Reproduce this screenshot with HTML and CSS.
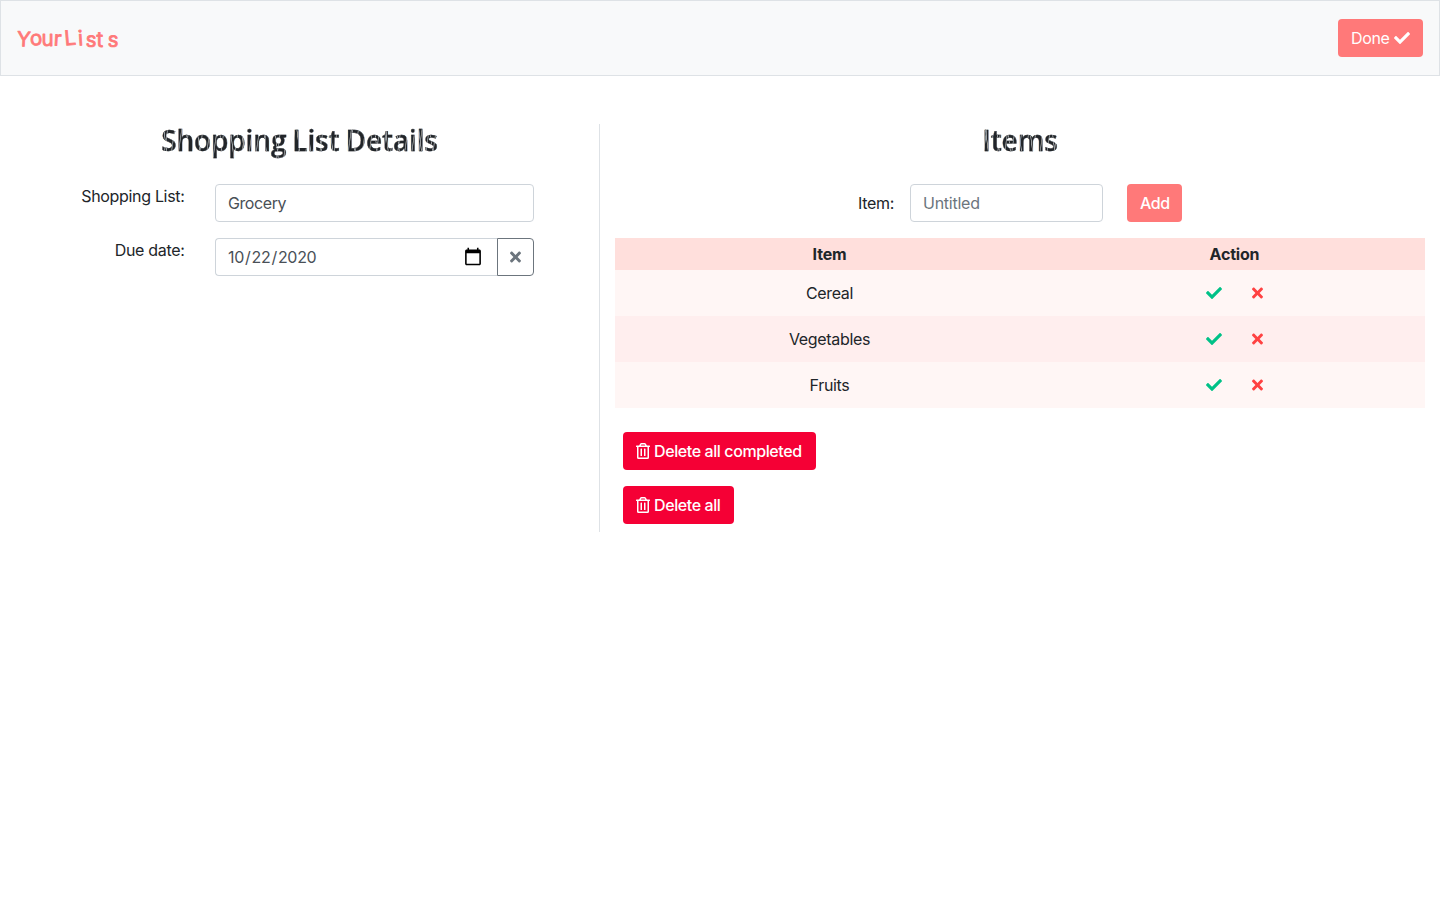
FILE: index.html
```html
<!DOCTYPE html>
<html lang="en-US">
<head>
<meta charset="utf-8">
<title>YourLists</title>
<link rel="stylesheet" href="styles.css">
</head>
<body>
<svg class="sprite" aria-hidden="true">
  <symbol id="check" viewBox="0 0 512 512"><path d="M173.898 439.404l-166.4-166.4c-9.997-9.997-9.997-26.206 0-36.204l36.203-36.204c9.997-9.998 26.207-9.998 36.204 0L192 312.69 432.095 72.596c9.997-9.997 26.207-9.997 36.204 0l36.203 36.204c9.997 9.997 9.997 26.206 0 36.204l-294.4 294.401c-9.998 9.997-26.207 9.997-36.204-.001z"/></symbol>
  <symbol id="times" viewBox="0 0 352 512"><path d="M242.72 256l100.07-100.07c12.28-12.28 12.28-32.19 0-44.48l-22.24-22.24c-12.28-12.28-32.19-12.28-44.48 0L176 189.28 75.93 89.21c-12.28-12.28-32.19-12.28-44.48 0L9.21 111.45c-12.28 12.28-12.28 32.19 0 44.48L109.28 256 9.21 356.07c-12.28 12.28-12.28 32.19 0 44.48l22.24 22.24c12.28 12.28 32.2 12.28 44.48 0L176 322.72l100.07 100.07c12.28 12.28 32.2 12.28 44.48 0l22.24-22.24c12.28-12.28 12.28-32.19 0-44.48L242.72 256z"/></symbol>
  <symbol id="trash" viewBox="0 0 448 512"><path d="M268 416h24a12 12 0 0 0 12-12V188a12 12 0 0 0-12-12h-24a12 12 0 0 0-12 12v216a12 12 0 0 0 12 12zM432 80h-82.41l-34-56.7A48 48 0 0 0 274.41 0H173.59a48 48 0 0 0-41.16 23.3L98.41 80H16A16 16 0 0 0 0 96v16a16 16 0 0 0 16 16h16v336a48 48 0 0 0 48 48h288a48 48 0 0 0 48-48V128h16a16 16 0 0 0 16-16V96a16 16 0 0 0-16-16zM171.84 50.91A6 6 0 0 1 177 48h94a6 6 0 0 1 5.15 2.91L293.61 80H154.39zM368 464H80V128h288zm-212-48h24a12 12 0 0 0 12-12V188a12 12 0 0 0-12-12h-24a12 12 0 0 0-12 12v216a12 12 0 0 0 12 12z"/></symbol>
</svg>
<nav class="navbar">
  <a class="brand">
    <svg class="wordmark" width="106" height="30" viewBox="0 0 106 30">
      <text y="23 22.5 22.5 22.5 22.5 22.5 23.5 23.5 23.5" x="-0.5 13.3 24.5 36.5 48 61.5 68.5 79.5 90.5" rotate="3 -3 0 3 -5 -4 2 0 2">YourLists</text>
    </svg>
  </a>
  <button class="btn btn-coral btn-done">Done <svg class="icon"><use href="#check"/></svg></button>
</nav>
<main class="page">
  <section class="details">
    <h2 class="heading heading-details">Shopping List Details</h2>
    <div class="row">
      <label class="label">Shopping List:</label>
      <input class="input" type="text" value="Grocery">
    </div>
    <div class="row">
      <label class="label">Due date:</label>
      <div class="group">
        <input class="input input-date" type="date" value="2020-10-22">
        <button class="clear"><svg class="icon icon-times"><use href="#times"/></svg></button>
      </div>
    </div>
  </section>
  <section class="items">
    <h2 class="heading heading-items">Items</h2>
    <div class="add-row">
      <label>Item:</label>
      <input class="input input-item" type="text" placeholder="Untitled">
      <button class="btn btn-coral btn-add">Add</button>
    </div>
    <table class="table">
      <thead><tr><th class="col-item">Item</th><th>Action</th></tr></thead>
      <tbody>
        <tr><td>Cereal</td><td><div class="actions"><svg class="icon ok"><use href="#check"/></svg><svg class="icon icon-times no"><use href="#times"/></svg></div></td></tr>
        <tr><td>Vegetables</td><td><div class="actions"><svg class="icon ok"><use href="#check"/></svg><svg class="icon icon-times no"><use href="#times"/></svg></div></td></tr>
        <tr><td>Fruits</td><td><div class="actions"><svg class="icon ok"><use href="#check"/></svg><svg class="icon icon-times no"><use href="#times"/></svg></div></td></tr>
      </tbody>
    </table>
    <div class="bulk">
      <button class="btn btn-red btn-completed"><svg class="icon icon-trash"><use href="#trash"/></svg> Delete all completed</button>
      <button class="btn btn-red btn-all"><svg class="icon icon-trash"><use href="#trash"/></svg> Delete all</button>
    </div>
  </section>
</main>
</body>
</html>
```
FILE: styles.css
```css
*, *::before, *::after { box-sizing: border-box; }
body {
  margin: 0;
  background: #fff;
  color: #212529;
  font: 400 16px/24px Inter, "Liberation Sans", sans-serif;
  letter-spacing: -0.32px;
}
input, button { font: inherit; letter-spacing: inherit; margin: 0; }
.sprite { display: none; }
.icon { width: 16px; height: 16px; fill: currentColor; flex: none; }
.icon-times { width: 11px; }
.icon-trash { width: 14px; }

.navbar {
  display: flex;
  align-items: center;
  justify-content: space-between;
  height: 76px;
  padding: 0 16px;
  background: #f8f9fa;
  border: 1px solid #dee2e6;
}
.brand { display: flex; }
.wordmark {
  overflow: visible;
  fill: #ff7979;
  stroke: #ff7979;
  stroke-width: 0.8px;
  stroke-linejoin: round;
  font: 400 20.5px Inter, sans-serif;
  letter-spacing: 0;
}

.btn {
  display: inline-flex;
  align-items: center;
  justify-content: flex-start;
  gap: 4px;
  height: 38px;
  padding: 0 0 0 13px;
  border: 0;
  border-radius: 4px;
  color: #fff;
  font-weight: 500;
  letter-spacing: -0.4px;
  white-space: nowrap;
}
.btn-coral { background: #ff7979; }
.btn-red { background: #f50035; }
.btn-done { width: 85px; font-weight: 400; letter-spacing: -0.35px; }
.btn-add { width: 55px; margin-left: 24px; }
.btn-completed { width: 193px; }
.btn-all { width: 111px; }

.page { display: flex; padding-top: 48px; }
.details {
  width: 600px;
  height: 408px;
  padding: 0 65px 0 15px;
  border-right: 1px solid #dee2e6;
}
.items { width: 840px; padding: 0 15px; }

.heading {
  height: 38px;
  margin: 0 0 22px;
  font: 600 28px/32px "Open Sans", sans-serif;
  text-align: center;
  color: transparent;
  -webkit-text-stroke: 0.3px rgba(33, 37, 41, 0.6);
  background:
    repeating-linear-gradient(83deg, transparent 0 8px, #9b9ea1 8.5px 9px, transparent 9.5px 11px),
    repeating-linear-gradient(98deg, #212529 0 4px, #85898c 4.6px 5.1px, #212529 5.7px 7px);
  -webkit-background-clip: text;
  background-clip: text;
}
.heading-details { letter-spacing: -0.15px; word-spacing: -1px; margin-right: -50px; }
.heading-items { letter-spacing: -0.1px; }

.row { display: flex; align-items: flex-start; margin-bottom: 16px; }
.label { width: 200px; padding-right: 30.5px; text-align: right; }
.input {
  flex: 1;
  min-width: 0;
  height: 38px;
  padding: 6px 12px;
  color: #495057;
  background: #fff;
  border: 1px solid #ced4da;
  border-radius: 4px;
  outline: 0;
}
.input[type="text"] { letter-spacing: -0.42px; }
.input::placeholder { color: #6c757d; opacity: 1; letter-spacing: -0.25px; }
.group { display: flex; flex: 1; }
.input-date { padding: 6px 13px 6px 11px; border-right: 0; border-radius: 4px 0 0 4px; letter-spacing: -0.3px; }
.input-date::-webkit-calendar-picker-indicator { width: 20px; height: 20px; padding: 1px; margin-top: -1px; }
.clear {
  display: flex;
  align-items: center;
  justify-content: center;
  width: 37px;
  height: 38px;
  padding: 0;
  color: #6c757d;
  background: #fff;
  border: 1px solid #6c757d;
  border-radius: 0 4px 4px 0;
}

.add-row { display: flex; align-items: center; justify-content: center; margin-bottom: 16px; }
.input-item { flex: none; width: 193px; margin-left: 16px; }

.table { width: 100%; border-collapse: collapse; table-layout: fixed; text-align: center; }
.col-item { width: 429px; }
.table th { height: 32px; padding: 0; background: #ffdfdc; font-weight: 700; letter-spacing: -0.2px; }
.table td { height: 46px; padding: 0; background: #fff6f5; }
.table tbody tr:nth-child(even) td { background: #ffeeee; }
.actions { display: flex; justify-content: center; gap: 30px; }
.ok { color: #00c187; }
.no { color: #ff4141; }

.bulk { display: flex; flex-direction: column; align-items: flex-start; gap: 16px; padding: 24px 8px 0; }
```
